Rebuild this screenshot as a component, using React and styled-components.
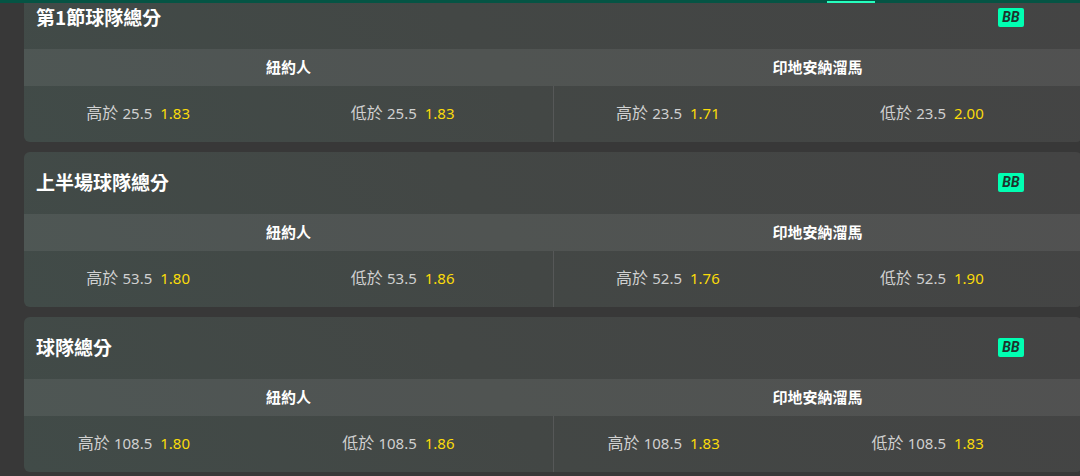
import React from 'react';
import styled, { createGlobalStyle } from 'styled-components';

const markets = [
  {
    id: 'q1',
    title: '第1節球隊總分',
    teams: [
      { name: '紐約人', line: '25.5', over: '1.83', under: '1.83' },
      { name: '印地安納溜馬', line: '23.5', over: '1.71', under: '2.00' },
    ],
  },
  {
    id: 'h1',
    title: '上半場球隊總分',
    teams: [
      { name: '紐約人', line: '53.5', over: '1.80', under: '1.86' },
      { name: '印地安納溜馬', line: '52.5', over: '1.76', under: '1.90' },
    ],
  },
  {
    id: 'full',
    title: '球隊總分',
    teams: [
      { name: '紐約人', line: '108.5', over: '1.80', under: '1.86' },
      { name: '印地安納溜馬', line: '108.5', over: '1.83', under: '1.83' },
    ],
  },
];

function Selection({ label, line, odds }) {
  return (
    <SelectionButton type="button">
      <Label>
        {label} <Num>{line}</Num>
      </Label>
      <Odds>{odds}</Odds>
    </SelectionButton>
  );
}

function Market({ title, teams }) {
  return (
    <Card>
      <CardHeader>
        <Title>{title}</Title>
        <Badge>BB</Badge>
      </CardHeader>
      <Teams>
        {teams.map((team) => (
          <TeamName key={team.name}>{team.name}</TeamName>
        ))}
      </Teams>
      <Prices>
        {teams.map((team) => (
          <TeamPrices key={team.name}>
            <Selection label="高於" line={team.line} odds={team.over} />
            <Selection label="低於" line={team.line} odds={team.under} />
          </TeamPrices>
        ))}
      </Prices>
    </Card>
  );
}

function App() {
  return (
    <>
      <GlobalStyle />
      <TopBar>
        <ActiveTab />
      </TopBar>
      <Page>
        <MarketList>
          {markets.map((market) => (
            <Market key={market.id} title={market.title} teams={market.teams} />
          ))}
        </MarketList>
      </Page>
    </>
  );
}

export default App;

const GlobalStyle = createGlobalStyle`
  * {
    box-sizing: border-box;
  }
  body {
    margin: 0;
    background: #383838;
    color: #fff;
    font-family: 'Noto Sans', 'Noto Sans CJK TC', sans-serif;
  }
`;

// stays over the list while it scrolls
const TopBar = styled.div`
  position: fixed;
  top: 0;
  left: 0;
  right: 0;
  z-index: 1;
  display: flex;
  justify-content: flex-end;
  align-items: flex-end;
  height: 3px;
  padding-right: 205px;
  background: #055444;
`;

const ActiveTab = styled.span`
  width: 48px;
  height: 2px;
  background: #26ffbe;
`;

const Page = styled.main`
  display: flow-root;
  overflow: hidden;
`;

const MarketList = styled.div`
  display: flex;
  flex-direction: column;
  gap: 10px;
  margin: -13px -2px 0 24px;
  padding-bottom: 4px;
`;

const Card = styled.section`
  overflow: hidden;
  border-radius: 6px;
  background: linear-gradient(50deg, #414b48 0%, #434745 45%, #444444 100%);
`;

const CardHeader = styled.header`
  display: flex;
  align-items: center;
  justify-content: space-between;
  height: 62px;
  padding: 0 58px 2px 12px;
`;

const Title = styled.h2`
  margin: 0;
  font-family: 'Noto Sans CJK TC', sans-serif;
  font-size: 19px;
  font-weight: 700;
  line-height: 24px;
`;

const Badge = styled.span`
  display: flex;
  align-items: center;
  justify-content: center;
  width: 26px;
  height: 19px;
  border-radius: 2px;
  background: #00ffb2;
  color: #1e332d;
  font-family: 'Liberation Sans Narrow', Roboto, sans-serif;
  font-size: 14px;
  font-style: italic;
  font-weight: 700;
  line-height: 19px;
`;

const Teams = styled.div`
  display: grid;
  grid-template-columns: 1fr 1fr;
  align-items: center;
  height: 37px;
  padding-bottom: 2px;
  background: rgba(255, 255, 255, 0.07);
`;

const TeamName = styled.h3`
  margin: 0;
  font-family: 'Noto Sans CJK TC', sans-serif;
  font-size: 15px;
  font-weight: 700;
  line-height: 20px;
  text-align: center;
`;

const Prices = styled.div`
  display: grid;
  grid-template-columns: 1fr 1fr;
`;

const TeamPrices = styled.div`
  display: grid;
  grid-template-columns: 1fr 1fr;
  height: 56px;

  & + & {
    border-left: 1px solid #565858;
  }
`;

const SelectionButton = styled.button`
  display: grid;
  grid-template-columns: 1fr 1fr;
  gap: 8px;
  align-items: center;
  align-content: center;
  padding: 0 0 2px;
  border: 0;
  background: none;
  color: #d0d0d0;
  font-family: inherit;
  font-size: 16px;
  line-height: 24px;
  cursor: pointer;
`;

const Label = styled.span`
  text-align: right;
  white-space: nowrap;
`;

const Num = styled.span`
  font-size: 15px;
`;

const Odds = styled.span`
  color: #fadb0a;
  font-size: 15px;
  text-align: left;
`;
